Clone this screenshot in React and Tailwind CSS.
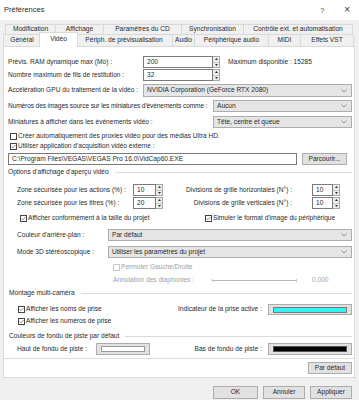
import React from 'react';

const Chevron = () => (
  <svg width="6" height="4" viewBox="0 0 6 4" className="shrink-0">
    <path d="M0.5 0.5 L3 3 L5.5 0.5" fill="none" stroke="#777" strokeWidth="0.8" />
  </svg>
);

const Spinner = () => (
  <div className="flex h-full w-[7px] flex-col border border-l-0 border-[#a9a9a9] bg-[#ececec]">
    <div className="flex flex-1 items-center justify-center border-b border-[#c8c8c8]">
      <svg width="3" height="2" viewBox="0 0 3 2"><path d="M0 2 L1.5 0 L3 2Z" fill="#333" /></svg>
    </div>
    <div className="flex flex-1 items-center justify-center">
      <svg width="3" height="2" viewBox="0 0 3 2"><path d="M0 0 L1.5 2 L3 0Z" fill="#333" /></svg>
    </div>
  </div>
);

const NumField = ({ value, width }) => (
  <div className="flex h-full">
    <div className={`flex h-full items-center border border-[#7a7a7a] bg-white pl-[3px] ${width}`}>{value}</div>
    <Spinner />
  </div>
);

const Select = ({ value }) => (
  <div className="flex h-full flex-1 items-center justify-between border border-[#adadad] bg-[#e5e5e5] pl-[3px] pr-[4px]">
    <span>{value}</span>
    <Chevron />
  </div>
);

const Check = ({ checked, disabled }) => (
  <div
    className={`flex h-[7px] w-[7px] shrink-0 items-center justify-center border bg-white ${
      disabled ? 'border-[#c8c8c8]' : 'border-[#444]'
    }`}
  >
    {checked && (
      <svg width="6" height="5" viewBox="0 0 6 5">
        <path d="M0.6 2.6 L2.2 4.1 L5.4 0.7" fill="none" stroke="#333" strokeWidth="0.7" />
      </svg>
    )}
  </div>
);

const Group = ({ title }) => (
  <div className="flex h-full items-center">
    <span>{title}</span>
    <div className="ml-[6px] h-px flex-1 bg-[#dcdcdc]" />
  </div>
);

const Button = ({ children, className = '' }) => (
  <div className={`flex h-full items-center justify-center border border-[#adadad] bg-[#e1e1e1] ${className}`}>
    {children}
  </div>
);

const Tab = ({ label, w }) => (
  <div className={`flex h-full items-center justify-center border border-b-0 border-l-0 border-[#d9d9d9] bg-[#f0f0f0] ${w}`}>
    {label}
  </div>
);

export default function App() {
  return (
    <div className="flex h-[400px] w-[359px] flex-col overflow-hidden whitespace-nowrap bg-[#f0f0f0] font-['Segoe_UI','Liberation_Sans',sans-serif] text-[6.6px] leading-none text-[#2a2a2a]">
      {/* title bar */}
      <div className="flex h-[20px] items-center justify-between bg-white pl-[4px] pr-[9px] text-[7.5px]">
        <span>Préférences</span>
        <div className="flex items-center gap-[20px] text-[#333]">
          <span className="text-[7px]">?</span>
          <span className="text-[10px] font-light">×</span>
        </div>
      </div>

      {/* tabs */}
      <div className="mt-[4px] flex h-[10px] pl-[5px]">
        <div className="flex h-full border-l border-[#d9d9d9]">
          <Tab label="Modification" w="w-[50px]" />
          <Tab label="Affichage" w="w-[48px]" />
          <Tab label="Paramètres du CD" w="w-[78px]" />
          <Tab label="Synchronisation" w="w-[62px]" />
          <Tab label="Contrôle ext. et automatisation" w="w-[109px]" />
        </div>
      </div>
      <div className="flex h-[12px] pl-[3px]">
        <div className="flex h-full border-l border-[#d9d9d9]">
          <Tab label="Général" w="w-[37px]" />
          <div className="relative z-10 -mx-[2px] -mt-[2px] flex h-[15px] w-[39px] items-center justify-center border border-b-0 border-[#d9d9d9] bg-white pb-[1px]">
            Vidéo
          </div>
          <Tab label="Périph. de prévisualisation" w="w-[97px]" />
          <Tab label="Audio" w="w-[22px]" />
          <Tab label="Périphérique audio" w="w-[74px]" />
          <Tab label="MIDI" w="w-[32px]" />
          <Tab label="Effets VST" w="w-[53px]" />
        </div>
      </div>

      {/* panel */}
      <div className="ml-[3px] flex h-[332px] w-[352px] flex-col border border-[#d9d9d9] bg-white pl-[4px] pr-[2px]">
        <div className="mt-[9px] flex h-[12px] items-center">
          <span className="w-[135px]">Prévis. RAM dynamique max (Mo) :</span>
          <NumField value="200" width="w-[70px]" />
          <span className="ml-[8px]">Maximum disponible : 15285</span>
        </div>
        <div className="mt-[1px] flex h-[12px] items-center">
          <span className="w-[135px]">Nombre maximum de fils de restitution :</span>
          <NumField value="32" width="w-[70px]" />
        </div>
        <div className="mt-[3px] flex h-[13px] items-center">
          <span className="w-[135px]">Accélération GPU du traitement de la vidéo :</span>
          <Select value="NVIDIA Corporation (GeForce RTX 2080)" />
        </div>
        <div className="mt-[3px] flex h-[12px] items-center">
          <span className="w-[205px] tracking-[-0.12px]">Numéros des images source sur les miniatures d'événements comme :</span>
          <Select value="Aucun" />
        </div>
        <div className="mt-[4px] flex h-[12px] items-center">
          <span className="w-[205px]">Miniatures à afficher dans les événements vidéo :</span>
          <Select value="Tête, centre et queue" />
        </div>
        <div className="mt-[3px] flex h-[10px] items-center gap-[1px] pl-[2px]">
          <Check />
          <span>Créer automatiquement des proxies vidéo pour des médias Ultra HD.</span>
        </div>
        <div className="flex h-[10px] items-center gap-[1px] pl-[2px]">
          <Check checked />
          <span>Utiliser application d'acquisition vidéo externe :</span>
        </div>
        <div className="mt-[2px] flex h-[12px] items-center">
          <div className="flex h-full w-[289px] items-center border border-[#7a7a7a] bg-white pl-[3px]">
            C:\Program Files\VEGAS\VEGAS Pro 16.0\VidCap60.EXE
          </div>
          <Button className="ml-[5px] w-[45px]">Parcourir...</Button>
        </div>
        <div className="mt-[1px] h-[12px]">
          <Group title="Options d'affichage d'aperçu vidéo" />
        </div>
        <div className="mt-[6px] flex h-[12px] items-center pl-[9px]">
          <span className="w-[116px]">Zone sécurisée pour les actions (%) :</span>
          <NumField value="10" width="w-[23px]" />
          <span className="w-[129px] text-right">Divisions de grille horizontales (N°) :</span>
          <div className="ml-[20px] h-full">
            <NumField value="10" width="w-[21px]" />
          </div>
        </div>
        <div className="mt-[1px] flex h-[12px] items-center pl-[9px]">
          <span className="w-[116px]">Zone sécurisée pour les titres (%) :</span>
          <NumField value="20" width="w-[23px]" />
          <span className="w-[129px] text-right">Divisions de grille verticales (N°) :</span>
          <div className="ml-[20px] h-full">
            <NumField value="10" width="w-[21px]" />
          </div>
        </div>
        <div className="mt-[4px] flex h-[10px] items-center">
          <div className="flex w-[197px] items-center gap-[1px] pl-[12px]">
            <Check checked />
            <span>Afficher conformément à la taille du projet</span>
          </div>
          <Check checked />
          <span className="ml-[1px]">Simuler le format d'image du périphérique</span>
        </div>
        <div className="mt-[6px] flex h-[12px] items-center pl-[9px]">
          <span className="w-[91px]">Couleur d'arrière-plan :</span>
          <Select value="Par défaut" />
        </div>
        <div className="mt-[5px] flex h-[12px] items-center pl-[9px]">
          <span className="w-[91px]">Mode 3D stéréoscopique :</span>
          <Select value="Utiliser les paramètres du projet" />
        </div>
        <div className="mt-[4px] flex h-[10px] items-center gap-[1px] pl-[105px] text-[#a0a0a0]">
          <Check disabled />
          <span>Permuter Gauche/Droite</span>
        </div>
        <div className="mt-[3px] flex h-[10px] items-center pl-[105px] text-[#a0a0a0]">
          <span className="w-[99px]">Annulation des diaphonies :</span>
          <div className="flex h-[3px] w-[85px] items-center">
            <div className="h-[3px] w-px bg-[#c8c8c8]" />
            <div className="h-px flex-1 bg-[#b8b8b8]" />
            <div className="h-[3px] w-px bg-[#c8c8c8]" />
          </div>
          <span className="ml-[15px]">0,000</span>
        </div>
        <div className="mt-[2px] h-[12px] pl-[1px]">
          <Group title="Montage multi-caméra" />
        </div>
        <div className="mt-[5px] flex h-[11px] items-center">
          <div className="flex w-[170px] items-center gap-[1px] pl-[10px]">
            <Check checked />
            <span>Afficher les noms de prise</span>
          </div>
          <span className="w-[90px]">Indicateur de la prise active :</span>
          <div className="flex h-full flex-1 items-center justify-center border border-[#adadad] bg-[#e1e1e1] px-[4px]">
            <div className="h-[6px] w-full border border-[#7a7a7a] bg-[#33f2f2]" />
          </div>
        </div>
        <div className="mt-[1px] flex h-[10px] items-center gap-[1px] pl-[10px]">
          <Check checked />
          <span>Afficher les numéros de prise</span>
        </div>
        <div className="mt-[4px] h-[12px] pl-[1px]">
          <Group title="Couleurs de fondu de piste par défaut" />
        </div>
        <div className="mt-[1px] flex h-[12px] items-center pl-[9px]">
          <span className="w-[79px]">Haut de fondu de piste :</span>
          <div className="flex h-full w-[54px] items-center border border-[#adadad] bg-[#e1e1e1] px-[4px]">
            <div className="h-[6px] w-full border border-[#9a9a9a] bg-white" />
          </div>
          <span className="ml-auto">Bas de fondu de piste :</span>
          <div className="ml-[6px] flex h-full w-[84px] items-center border border-[#adadad] bg-[#e1e1e1] px-[4px]">
            <div className="h-[6px] w-full border border-[#555] bg-black" />
          </div>
        </div>
        <div className="-ml-[4px] -mr-[2px] mt-[3px] h-px bg-[#dcdcdc]" />
        <div className="mt-[3px] flex h-[12px] justify-end">
          <Button className="w-[44px]">Par défaut</Button>
        </div>
      </div>

      {/* bottom buttons */}
      <div className="mt-[8px] flex h-[13px] justify-end gap-[5px] pr-[7px]">
        <Button className="w-[45px] border-[#0078d7]">OK</Button>
        <Button className="w-[42px]">Annuler</Button>
        <Button className="w-[42px]">Appliquer</Button>
      </div>
    </div>
  );
}
